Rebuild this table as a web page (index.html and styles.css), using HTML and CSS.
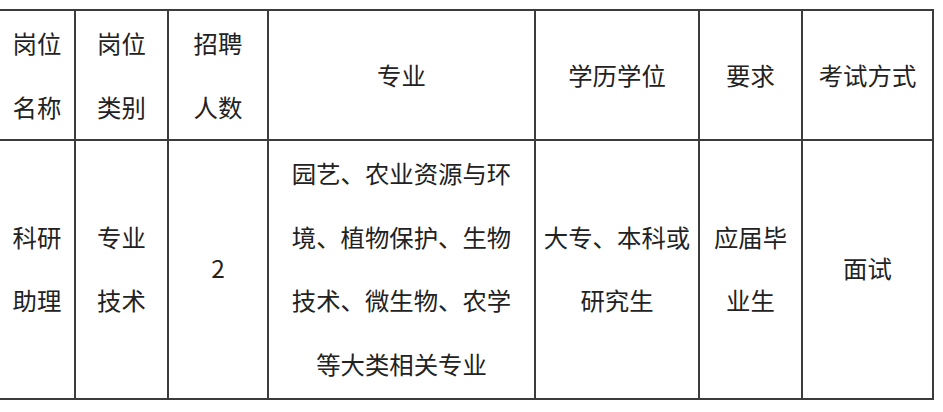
FILE: index.html
```html
<!DOCTYPE html>
<html lang="zh-CN">
<head>
<meta charset="utf-8">
<title>招聘岗位</title>
<link rel="stylesheet" href="styles.css">
</head>
<body>
<table class="jobs">
  <colgroup>
    <col class="c1"><col class="c2"><col class="c3"><col class="c4"><col class="c5"><col class="c6"><col class="c7">
  </colgroup>
  <thead>
    <tr class="head">
      <th class="first">岗位<br>名称</th>
      <th>岗位<br>类别</th>
      <th>招聘<br>人数</th>
      <th>专业</th>
      <th>学历学位</th>
      <th>要求</th>
      <th>考试方式</th>
    </tr>
  </thead>
  <tbody>
    <tr class="body">
      <td class="first">科研<br>助理</td>
      <td>专业<br>技术</td>
      <td>2</td>
      <td>园艺、农业资源与环<br>境、植物保护、生物<br>技术、微生物、农学<br>等大类相关专业</td>
      <td>大专、本科或<br>研究生</td>
      <td>应届毕<br>业生</td>
      <td>面试</td>
    </tr>
  </tbody>
</table>
</body>
</html>
```

FILE: styles.css
```css
html, body {
  margin: 0;
  padding: 0;
  background: #ffffff;
}

body {
  font-family: "Noto Sans CJK SC", "Noto Sans", sans-serif;
  color: #222222;
}

.jobs {
  margin-top: 9px;
  margin-left: 0;
  border-collapse: collapse;
  table-layout: fixed;
  width: 933px;
  font-size: 24.4px;
  line-height: 64px;
}

.c1 { width: 75px; }
.c2 { width: 93px; }
.c3 { width: 100px; }
.c4 { width: 267px; }
.c5 { width: 164px; }
.c6 { width: 103px; }
.c7 { width: 131px; }

.jobs th,
.jobs td {
  border: 2px solid #3c3c3c;
  padding: 0;
  text-align: center;
  vertical-align: middle;
  font-weight: normal;
  white-space: nowrap;
}

.jobs .first {
  border-left: none;
}

.head th {
  height: 126px;
}

.body td {
  line-height: 63.5px;
  height: 254px;
  padding-bottom: 3px;
}
```
